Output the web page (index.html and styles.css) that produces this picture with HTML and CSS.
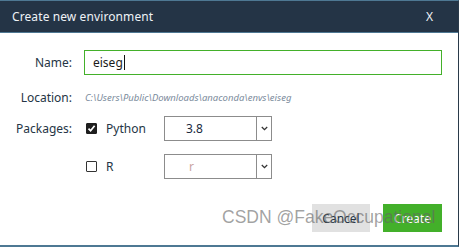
FILE: index.html
```html
<!DOCTYPE html>
<html>
<head>
<meta charset="utf-8">
<link rel="stylesheet" href="styles.css">
</head>
<body>
<div class="dialog">
  <div class="header">
    <div class="title">Create new environment</div>
    <div class="close">X</div>
  </div>
  <div class="body">
    <div class="row row-name">
      <div class="label">Name:</div>
      <div class="input"><span class="value">eiseg</span><span class="caret"></span></div>
    </div>
    <div class="row row-loc">
      <div class="label">Location:</div>
      <div class="path">C:\Users\Public\Downloads\anaconda\envs\eiseg</div>
    </div>
    <div class="row row-py">
      <div class="label">Packages:</div>
      <div class="pkg">
        <span class="check checked"><svg width="9" height="9" viewBox="0 0 9 9"><path d="M1.5 4.6 L3.6 6.8 L7.6 1.8" fill="none" stroke="#fff" stroke-width="1.7"/></svg></span>
        <span class="pkg-name">Python</span>
      </div>
      <div class="select"><span class="sel-value">3.8</span><span class="sel-arrow"><svg width="7" height="5" viewBox="0 0 7 5"><path d="M0.8 1 L3.5 3.6 L6.2 1" fill="none" stroke="#333" stroke-width="1.3"/></svg></span></div>
    </div>
    <div class="row row-r">
      <div class="label"></div>
      <div class="pkg">
        <span class="check"></span>
        <span class="pkg-name">R</span>
      </div>
      <div class="select"><span class="sel-value muted">r</span><span class="sel-arrow"><svg width="7" height="5" viewBox="0 0 7 5"><path d="M0.8 1 L3.5 3.6 L6.2 1" fill="none" stroke="#333" stroke-width="1.3"/></svg></span></div>
    </div>
    <div class="buttons">
      <div class="btn cancel">Cancel</div>
      <div class="btn create">Create</div>
    </div>
  </div>
  <div class="watermark">CSDN @FakeOccupational</div>
</div>
</body>
</html>
```
FILE: styles.css
```css
html, body {
  margin: 0;
  padding: 0;
  background: #fff;
}
body {
  font-family: "Noto Sans", "Open Sans", sans-serif;
  font-size: 12px;
  color: #253545;
}
.dialog {
  position: relative;
  width: 459px;
  height: 247px;
  box-sizing: border-box;
  border-top: 1px solid #4e7893;
  border-bottom: 2px solid #4e7893;
  border-right: 1px solid #2a3a4a;
  background: #fff;
  overflow: hidden;
}
.header {
  height: 31px;
  background: #243446;
  border-bottom: 1px solid #4e7893;
  display: flex;
  align-items: center;
  justify-content: space-between;
  padding: 0 25px 0 12px;
  color: #eef2f6;
}
.title {
  font-size: 12px;
  letter-spacing: 0.1px;
}
.close {
  font-size: 12px;
}
.body {
  display: flex;
  flex-direction: column;
}
.row {
  display: flex;
  align-items: center;
  height: 25px;
}
.label {
  width: 72px;
  text-align: right;
  margin-right: 12px;
  flex: none;
  color: #253545;
}
.row-name { margin-top: 17px; }
.row-loc { margin-top: 12px; height: 20px; }
.row-py { margin-top: 9px; }
.row-r { margin-top: 13px; }
.input {
  width: 358px;
  height: 25px;
  box-sizing: border-box;
  border: 1px solid #43b02a;
  display: flex;
  align-items: center;
  padding-left: 8px;
  color: #1a1a1a;
}
.caret {
  display: inline-block;
  width: 1px;
  height: 15px;
  background: #111;
  margin-left: 1px;
}
.path {
  font-size: 9.5px;
  font-style: italic;
  color: #7b8b9c;
  margin-left: 1px;
}
.pkg {
  width: 80px;
  display: flex;
  align-items: center;
  flex: none;
}
.check {
  width: 11px;
  height: 11px;
  box-sizing: border-box;
  border: 1.5px solid #333;
  border-radius: 1px;
  margin-left: 2px;
  margin-right: 9px;
  display: flex;
  align-items: center;
  justify-content: center;
  background: #fff;
}
.check.checked {
  background: #1e1e1e;
  border-color: #1e1e1e;
}
.pkg-name {
  color: #253545;
}
.select {
  width: 108px;
  height: 25px;
  box-sizing: border-box;
  border: 1px solid #8c8c8c;
  display: flex;
  align-items: center;
}
.sel-value {
  flex: 1;
  padding-left: 21px;
  color: #1a2a40;
}
.sel-value.muted {
  color: #c9a3a3;
  padding-left: 24px;
}
.sel-arrow {
  width: 14px;
  height: 100%;
  border-left: 1px solid #8c8c8c;
  display: flex;
  align-items: center;
  justify-content: center;
}
.buttons {
  display: flex;
  justify-content: flex-end;
  gap: 13px;
  margin-top: 25px;
  padding-right: 16px;
}
.btn {
  height: 28px;
  display: flex;
  align-items: center;
  justify-content: center;
  font-size: 12px;
}
.cancel {
  width: 58px;
  background: #e1e1e1;
  color: #253545;
}
.create {
  width: 59px;
  background: #43b02a;
  color: #fff;
}
.watermark {
  position: absolute;
  left: 222px;
  top: 206px;
  font-family: "Liberation Sans", Arial, sans-serif;
  font-size: 17.5px;
  color: rgba(100, 100, 100, 0.6);
  white-space: nowrap;
  pointer-events: none;
}
```
